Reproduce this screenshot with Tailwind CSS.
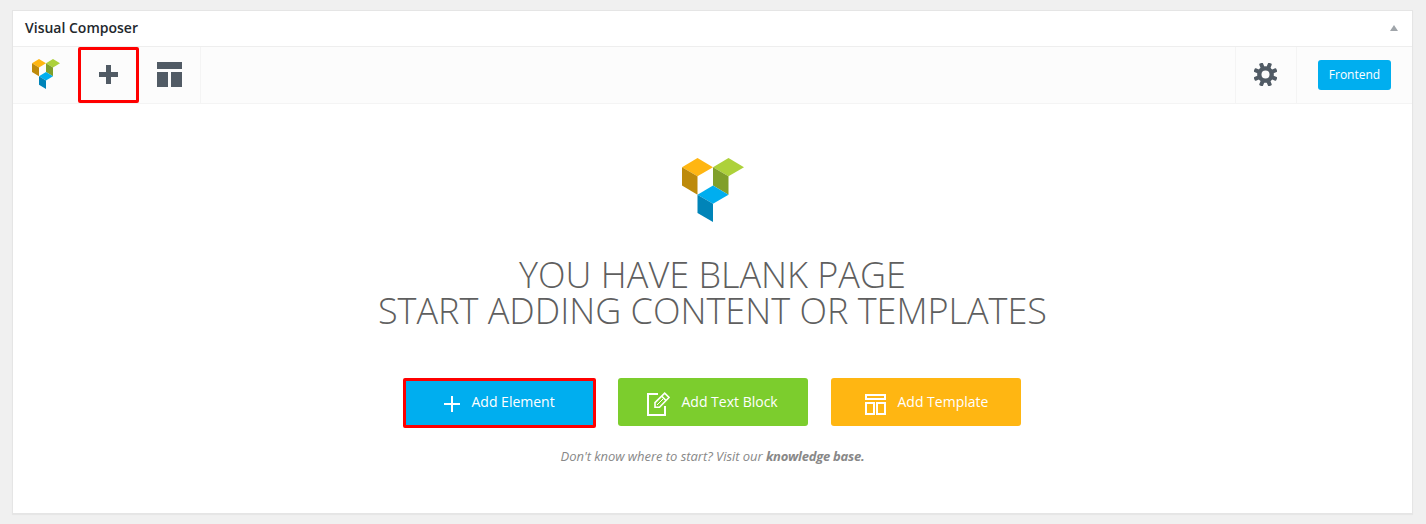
<!DOCTYPE html>
<html lang="en">
<head>
<meta charset="utf-8">
<title>Visual Composer</title>
<script src="https://cdn.jsdelivr.net/npm/@tailwindcss/browser@4"></script>
</head>
<body class="h-[524px] overflow-hidden bg-[#f0f0f0] px-3 pt-2.5 font-['Open_Sans',sans-serif]">
<svg class="hidden">
  <symbol id="logo" viewBox="0 0 62 64" preserveAspectRatio="none">
    <path fill="#ffb612" d="M0 9.3 15.5 0 31 9.3 15.5 18.3z"/>
    <path fill="#bd8a0b" d="M0 9.3 15.5 18.3V36.7L0 27.6z"/>
    <path fill="#add13a" d="M31 9.3 46.5 0 62 9.3 46.5 18.3z"/>
    <path fill="#809f2a" d="M31 9.3 46.5 18.3V36.7L31 27.6z"/>
    <path fill="#00aeef" d="M15.5 36.7 31 27.6 46.5 36.7 31 45.7z"/>
    <path fill="#0084b8" d="M15.5 36.7 31 45.7V64L15.5 55z"/>
  </symbol>
</svg>
<main class="h-[504px] w-[1401px] border border-[#e5e5e5] bg-white shadow-[0_1px_1px_rgba(0,0,0,0.04)]">
  <header class="flex h-9 items-center justify-between border-b border-[#eee] pr-3.5 pb-0.5 pl-3">
    <h2 class="text-sm leading-5 font-semibold text-[#23282d]">Visual Composer</h2>
    <svg class="h-1.5 w-2" viewBox="0 0 8 6"><path fill="#a0a5aa" d="M4 0 8 6H0z"/></svg>
  </header>
  <nav class="flex h-[57px] border-b border-[#f4f4f4] bg-[#fcfcfc]">
    <a class="flex w-[65px] pt-3 pl-[19px]"><svg class="h-[30px] w-[28px]"><use href="#logo"/></svg></a>
    <a class="flex h-14 w-[61px] justify-center rounded-xs border-3 border-[#f00] pt-[15px]">
      <svg class="h-[19px] w-[19px]" viewBox="0 0 19 19"><path fill="#515b65" d="M7 0h5v7h7v5h-7v7H7v-7H0V7h7z"/></svg>
    </a>
    <a class="flex w-[62px] items-start border-r border-[#f4f4f4] pt-[15px] pl-[18px]">
      <svg class="h-[25px] w-[25px]" viewBox="0 0 25 25"><path fill="#515b65" d="M0 0h25v7H0zM0 10h11v15H0zM14 10h11v15H14z"/></svg>
    </a>
    <div class="ml-auto flex w-[62px] border-x border-[#f4f4f4] pt-4 pl-[18px]">
      <svg class="h-[23px] w-[23px]" viewBox="0 0 23 23">
        <g fill="#515b65" transform="translate(11.5 11.5) rotate(22.5)">
          <g id="teeth"><rect x="-2" y="-12.2" width="4" height="24.4" rx="1"/><rect x="-12.2" y="-2" width="24.4" height="4" rx="1"/></g>
          <use href="#teeth" transform="rotate(45)"/>
          <circle r="8.3"/>
        </g>
        <circle cx="11.5" cy="11.5" r="4" fill="#fcfcfc"/>
      </svg>
    </div>
    <div class="flex w-[115px] pt-[13px] pl-[21px]">
      <a class="flex h-[30px] w-[73px] items-center justify-center rounded-[3px] bg-[#00aeef] text-xs text-white">Frontend</a>
    </div>
  </nav>
  <section class="flex flex-col items-center pt-[54px]">
    <svg class="h-16 w-[62px]"><use href="#logo"/></svg>
    <h1 class="mt-[35px] text-center text-[36px] leading-9 font-light whitespace-nowrap text-[#5f5f5f]">YOU HAVE BLANK PAGE<br>START ADDING CONTENT OR TEMPLATES</h1>
    <div class="mt-[49px] flex pr-px text-sm text-white">
      <a class="flex h-[50px] w-[193px] rounded-xs border-3 border-[#f00] bg-[#00aeef] pt-[11px] pl-[38px]">
        <svg class="mt-[4px] mr-[11.5px] h-4 w-4" viewBox="0 0 16 16"><path fill="#fff" d="M7 0h2v7h7v2H9v7H7V9H0V7h7z"/></svg>
        <span class="leading-5">Add Element</span>
      </a>
      <a class="ml-[22px] flex h-12 w-[190px] rounded-[3px] bg-[#7ccd2d] pt-3.5 pl-[29px]">
        <svg class="mr-[11.5px] h-6 w-[23px]" viewBox="0 0 23 24" fill="none" stroke="#fff">
          <path stroke-width="2" d="M11 2H1v21h17V14"/>
          <path stroke-width="1.6" d="M8 15.2V10.7L17.7 1.2 22 5.5 12.5 15.2zM14.8 4.2 19 8.5"/>
          <path stroke-width="1" d="M10 13l6-6"/>
        </svg>
        <span class="leading-5">Add Text Block</span>
      </a>
      <a class="ml-[23px] flex h-12 w-[190px] rounded-[3px] bg-[#ffb612] pt-3.5 pl-[34px]">
        <svg class="mt-0.5 mr-[11.5px] h-[21px] w-[21px]" viewBox="0 0 21 21" fill="none" stroke="#fff" stroke-width="2"><path d="M1 1h19v4H1zM1 9h8v11H1zM12 9h8v11H12z"/></svg>
        <span class="leading-5">Add Template</span>
      </a>
    </div>
    <p class="mt-[18px] text-[13px] leading-5 text-[#888] italic"><span class="tracking-[-0.04px]">Don't know where to start? Visit our </span><b class="font-bold tracking-[-0.24px]">knowledge base.</b></p>
  </section>
</main>
</body>
</html>
